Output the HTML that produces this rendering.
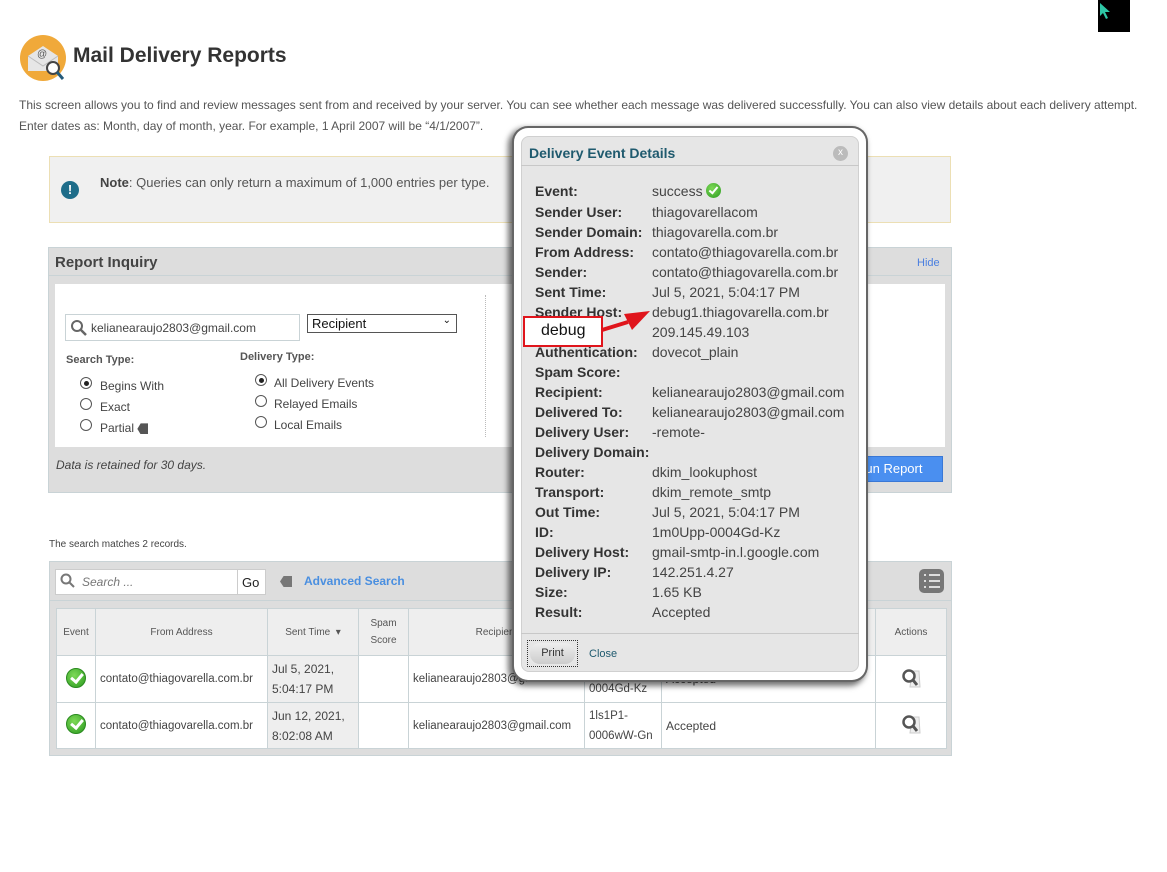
<!DOCTYPE html>
<html><head><style>
*{box-sizing:border-box;margin:0;padding:0}
body{width:1167px;height:872px;background:#fff;font-family:"Liberation Sans",sans-serif;color:#333;position:relative;overflow:hidden}
.a{position:absolute}
.t{font-size:12px;color:#444;white-space:nowrap}
.rad{position:absolute;width:12px;height:12px;border:1px solid #555;border-radius:50%;background:#fff}
.rad.on:after{content:"";position:absolute;left:2.5px;top:2.5px;width:5px;height:5px;border-radius:50%;background:#222}
table{table-layout:fixed}
td,th{border:1px solid #c9d3d6;font-size:12px;color:#444;padding:0 4px;white-space:nowrap;overflow:hidden}
th{font-weight:normal;background:#eee;font-size:10px;color:#555}
.chk{display:inline-block;width:20px;height:20px;border-radius:50%;background:radial-gradient(circle at 40% 35%,#7ed957,#2a9a1f);position:relative;border:1px solid #2a8a1f}
.chk:after{content:"";position:absolute;left:6px;top:2px;width:5px;height:9px;border:solid #fff;border-width:0 3px 3px 0;transform:rotate(40deg)}
.chk.s{width:15px;height:15px;border:none}
.chk.s:after{left:5px;top:2px;width:3px;height:7px;border-width:0 2px 2px 0}
.lbl{font-weight:bold;color:#333}
.row{position:absolute;left:535px;font-size:14px;white-space:nowrap}
.row span{position:absolute;left:117px;color:#444;font-weight:normal}
</style></head><body>
<div class="a" style="left:1098px;top:0;width:32px;height:32px;background:#000"></div>
<svg class="a" style="left:1099px;top:2px" width="14" height="18"><path d="M1 1 L1 14 L4 11 L7 17 L9 16 L6 10 L11 10 Z" fill="#2ec7a6"/></svg>
<svg class="a" style="left:20px;top:35px" width="48" height="48"><circle cx="23" cy="23" r="23" fill="#f0a93a"/><path d="M8 21 L23 11 L38 21 L38 36 L8 36 Z" fill="#e6e6e6"/><path d="M8 21 L23 31 L38 21" fill="none" stroke="#bbb"/><text x="17" y="22" font-size="10" fill="#555" font-family="Liberation Sans">@</text><circle cx="33" cy="33" r="6" fill="#fff" stroke="#444" stroke-width="2"/><path d="M37 37 L43 44" stroke="#245a7a" stroke-width="3"/></svg>
<div class="a" style="left:73px;top:44px;font-size:21px;font-weight:bold;color:#333">Mail Delivery Reports</div>
<div class="a t" style="left:19px;top:98px;color:#555">This screen allows you to find and review messages sent from and received by your server. You can see whether each message was delivered successfully. You can also view details about each delivery attempt.</div>
<div class="a t" style="left:19px;top:119px;color:#555">Enter dates as: Month, day of month, year. For example, 1 April 2007 will be “4/1/2007”.</div>
<div class="a" style="left:49px;top:156px;width:902px;height:67px;background:#f0f0f0;border:1px solid #ecdfb4"></div>
<div class="a" style="left:61px;top:181px;width:18px;height:18px;border-radius:50%;background:#1e6d8a;color:#fff;font-size:13px;font-weight:bold;text-align:center;line-height:18px">!</div>
<div class="a t" style="left:100px;top:175px;font-size:13px;color:#555"><b style="color:#444">Note</b>: Queries can only return a maximum of 1,000 entries per type.</div>
<div class="a" style="left:48px;top:247px;width:904px;height:246px;background:#ddd;border:1px solid #c9d3d6"></div>
<div class="a" style="left:49px;top:275px;width:902px;border-top:1px solid #c9d3d6"></div>
<div class="a" style="left:55px;top:254px;font-size:15px;font-weight:bold;color:#444">Report Inquiry</div>
<div class="a" style="left:917px;top:257px;font-size:11px;color:#4a7fe0">Hide</div>
<div class="a" style="left:55px;top:284px;width:890px;height:163px;background:#fff"></div>
<div class="a" style="left:65px;top:314px;width:235px;height:27px;border:1px solid #c9d3d6"></div>
<svg class="a" style="left:70px;top:319px" width="18" height="18"><circle cx="7" cy="7" r="5" fill="none" stroke="#666" stroke-width="2"/><path d="M11 11 L16 16" stroke="#666" stroke-width="2.5"/></svg>
<div class="a t" style="left:91px;top:321px;color:#444">kelianearaujo2803@gmail.com</div>
<div class="a" style="left:307px;top:314px;width:150px;height:19px;border:1px solid #555;font-size:13px;padding:1px 4px;color:#111">Recipient<span style="position:absolute;right:5px;top:0;font-size:10px">&#8964;</span></div>
<div class="a t" style="left:66px;top:354px;font-size:11px;font-weight:bold;color:#555">Search Type:</div>
<div class="a t" style="left:240px;top:351px;font-size:11px;font-weight:bold;color:#555">Delivery Type:</div>
<div class="rad on" style="left:80px;top:377px"></div><div class="a t" style="left:100px;top:379px">Begins With</div>
<div class="rad" style="left:80px;top:398px"></div><div class="a t" style="left:100px;top:400px">Exact</div>
<div class="rad" style="left:80px;top:419px"></div><div class="a t" style="left:100px;top:421px">Partial <span style="display:inline-block;width:11px;height:11px;background:#555;vertical-align:middle;clip-path:polygon(30% 0,100% 0,100% 100%,30% 100%,0 50%)"></span></div>
<div class="rad on" style="left:255px;top:374px"></div><div class="a t" style="left:274px;top:376px">All Delivery Events</div>
<div class="rad" style="left:255px;top:395px"></div><div class="a t" style="left:274px;top:397px">Relayed Emails</div>
<div class="rad" style="left:255px;top:416px"></div><div class="a t" style="left:274px;top:418px">Local Emails</div>
<div class="a" style="left:485px;top:295px;height:142px;border-left:1px dotted #bbb"></div>
<div class="a t" style="left:56px;top:458px;font-style:italic;color:#444">Data is retained for 30 days.</div>
<div class="a" style="left:845px;top:456px;width:98px;height:26px;background:#4a8ff0;border:1px solid #3a78d6;color:#fff;font-size:13px;line-height:24px;padding-left:10px">Run Report</div>
<div class="a t" style="left:49px;top:539px;font-size:10px;color:#444">The search matches 2 records.</div>
<div class="a" style="left:49px;top:561px;width:903px;height:195px;background:#ddd;border:1px solid #c9d3d6"></div>
<div class="a" style="left:50px;top:600px;width:901px;border-top:1px solid #c9d3d6"></div>
<div class="a" style="left:55px;top:569px;width:211px;height:26px;background:#fff;border:1px solid #ccc"></div>
<div class="a" style="left:237px;top:569px;height:26px;border-left:1px solid #ccc"></div>
<svg class="a" style="left:60px;top:573px" width="16" height="16"><circle cx="6" cy="6" r="4.5" fill="none" stroke="#777" stroke-width="2"/><path d="M9 9 L14 14" stroke="#777" stroke-width="2"/></svg>
<div class="a t" style="left:82px;top:575px;font-style:italic;color:#777">Search ...</div>
<div class="a t" style="left:242px;top:575px;font-size:13px;color:#222">Go</div>
<div class="a" style="left:280px;top:576px;width:12px;height:11px;background:#777;clip-path:polygon(30% 0,100% 0,100% 100%,30% 100%,0 50%)"></div>
<div class="a t" style="left:304px;top:574px;font-size:12px;font-weight:bold;color:#4a8fe0">Advanced Search</div>
<div class="a" style="left:919px;top:569px;width:25px;height:24px;border-radius:5px;background:#777"></div>
<svg class="a" style="left:922px;top:572px" width="20" height="18"><g stroke="#ddd" stroke-width="2"><path d="M2 3h2M7 3h11M2 9h2M7 9h11M2 15h2M7 15h11"/></g></svg>
<table class="a" style="left:56px;top:608px;width:890px;border-collapse:collapse;background:#fff">
<colgroup><col style="width:39px"><col style="width:172px"><col style="width:91px"><col style="width:50px"><col style="width:176px"><col style="width:77px"><col style="width:214px"><col style="width:71px"></colgroup>
<tr style="height:47px"><th>Event</th><th>From Address</th><th>Sent Time &nbsp;▾</th><th style="line-height:17px">Spam<br>Score</th><th>Recipient</th><th></th><th></th><th>Actions</th></tr>
<tr style="height:47px"><td style="text-align:center"><span class="chk"></span></td><td style="font-size:11.5px">contato@thiagovarella.com.br</td><td style="background:#eee;line-height:20px">Jul 5, 2021,<br>5:04:17 PM</td><td></td><td style="font-size:11.5px">kelianearaujo2803@gmail.com</td><td style="line-height:20px;font-size:11.5px"><br>0004Gd-Kz</td><td>Accepted</td><td style="text-align:center"><svg width="22" height="22"><path d="M12 4 L19 4 L20 20 L10 20 Z" fill="#eee" stroke="#ccc"/><circle cx="9" cy="9" r="5.5" fill="#fff" stroke="#555" stroke-width="2.5"/><path d="M13 13 L17 18" stroke="#555" stroke-width="3"/></svg></td></tr>
<tr style="height:46px"><td style="text-align:center"><span class="chk"></span></td><td style="font-size:11.5px">contato@thiagovarella.com.br</td><td style="background:#eee;line-height:20px">Jun 12, 2021,<br>8:02:08 AM</td><td></td><td style="font-size:11.5px">kelianearaujo2803@gmail.com</td><td style="line-height:20px;font-size:11.5px">1ls1P1-<br>0006wW-Gn</td><td>Accepted</td><td style="text-align:center"><svg width="22" height="22"><path d="M12 4 L19 4 L20 20 L10 20 Z" fill="#eee" stroke="#ccc"/><circle cx="9" cy="9" r="5.5" fill="#fff" stroke="#555" stroke-width="2.5"/><path d="M13 13 L17 18" stroke="#555" stroke-width="3"/></svg></td></tr>
</table>
<div class="a" style="left:514px;top:128px;width:352px;height:552px;border-radius:14px;background:#fff;box-shadow:0 0 0 2px #666,-3px 3px 6px 3px rgba(0,0,0,.55)"></div>
<div class="a" style="left:521px;top:136px;width:338px;height:536px;border-radius:8px;background:#e6e6e6;border:1px solid #d0d0d0"></div>
<div class="a" style="left:521px;top:165px;width:338px;border-top:1px solid #c8c8c8"></div>
<div class="a" style="left:529px;top:145px;font-size:14px;font-weight:bold;color:#1f5a6e">Delivery Event Details</div>
<div class="a" style="left:833px;top:146px;width:15px;height:15px;border-radius:50%;background:#bbb;color:#fff;font-size:10px;text-align:center;line-height:14px">x</div>
<div class="row lbl" style="top:183px">Event:<span>success <i class="chk s" style="vertical-align:-2px"></i></span></div>
<div class="row lbl" style="top:204px">Sender User:<span>thiagovarellacom</span></div>
<div class="row lbl" style="top:224px">Sender Domain:<span>thiagovarella.com.br</span></div>
<div class="row lbl" style="top:244px">From Address:<span>contato@thiagovarella.com.br</span></div>
<div class="row lbl" style="top:264px">Sender:<span>contato@thiagovarella.com.br</span></div>
<div class="row lbl" style="top:284px">Sent Time:<span>Jul 5, 2021, 5:04:17 PM</span></div>
<div class="row lbl" style="top:304px">Sender Host:<span>debug1.thiagovarella.com.br</span></div>
<div class="row" style="top:324px"><span>209.145.49.103</span></div>
<div class="row lbl" style="top:344px">Authentication:<span>dovecot_plain</span></div>
<div class="row lbl" style="top:364px">Spam Score:</div>
<div class="row lbl" style="top:384px">Recipient:<span>kelianearaujo2803@gmail.com</span></div>
<div class="row lbl" style="top:404px">Delivered To:<span>kelianearaujo2803@gmail.com</span></div>
<div class="row lbl" style="top:424px">Delivery User:<span>-remote-</span></div>
<div class="row lbl" style="top:444px">Delivery Domain:</div>
<div class="row lbl" style="top:464px">Router:<span>dkim_lookuphost</span></div>
<div class="row lbl" style="top:484px">Transport:<span>dkim_remote_smtp</span></div>
<div class="row lbl" style="top:504px">Out Time:<span>Jul 5, 2021, 5:04:17 PM</span></div>
<div class="row lbl" style="top:524px">ID:<span>1m0Upp-0004Gd-Kz</span></div>
<div class="row lbl" style="top:544px">Delivery Host:<span>gmail-smtp-in.l.google.com</span></div>
<div class="row lbl" style="top:564px">Delivery IP:<span>142.251.4.27</span></div>
<div class="row lbl" style="top:584px">Size:<span>1.65 KB</span></div>
<div class="row lbl" style="top:604px">Result:<span>Accepted</span></div>
<div class="a" style="left:521px;top:633px;width:338px;border-top:1px solid #c8c8c8"></div>
<div class="a" style="left:527px;top:640px;width:51px;height:27px;border:1px dotted #333;padding:2px"><div style="height:21px;border-radius:10px;background:linear-gradient(#eee,#ccc);font-size:11px;text-align:center;line-height:21px;color:#333">Print</div></div>
<div class="a" style="left:589px;top:648px;font-size:11px;color:#1f5a6e">Close</div>
<div class="a" style="left:523px;top:316px;width:80px;height:31px;background:#fff;border:2px solid #e0151c;font-size:16px;padding:4px 0 0 16px;color:#111">debug</div>
<svg class="a" style="left:600px;top:308px" width="52" height="28"><path d="M2 22 L28 14" stroke="#e0151c" stroke-width="4"/><path d="M24 6 L50 3 L32 22 Z" fill="#e0151c"/></svg>
</body></html>
